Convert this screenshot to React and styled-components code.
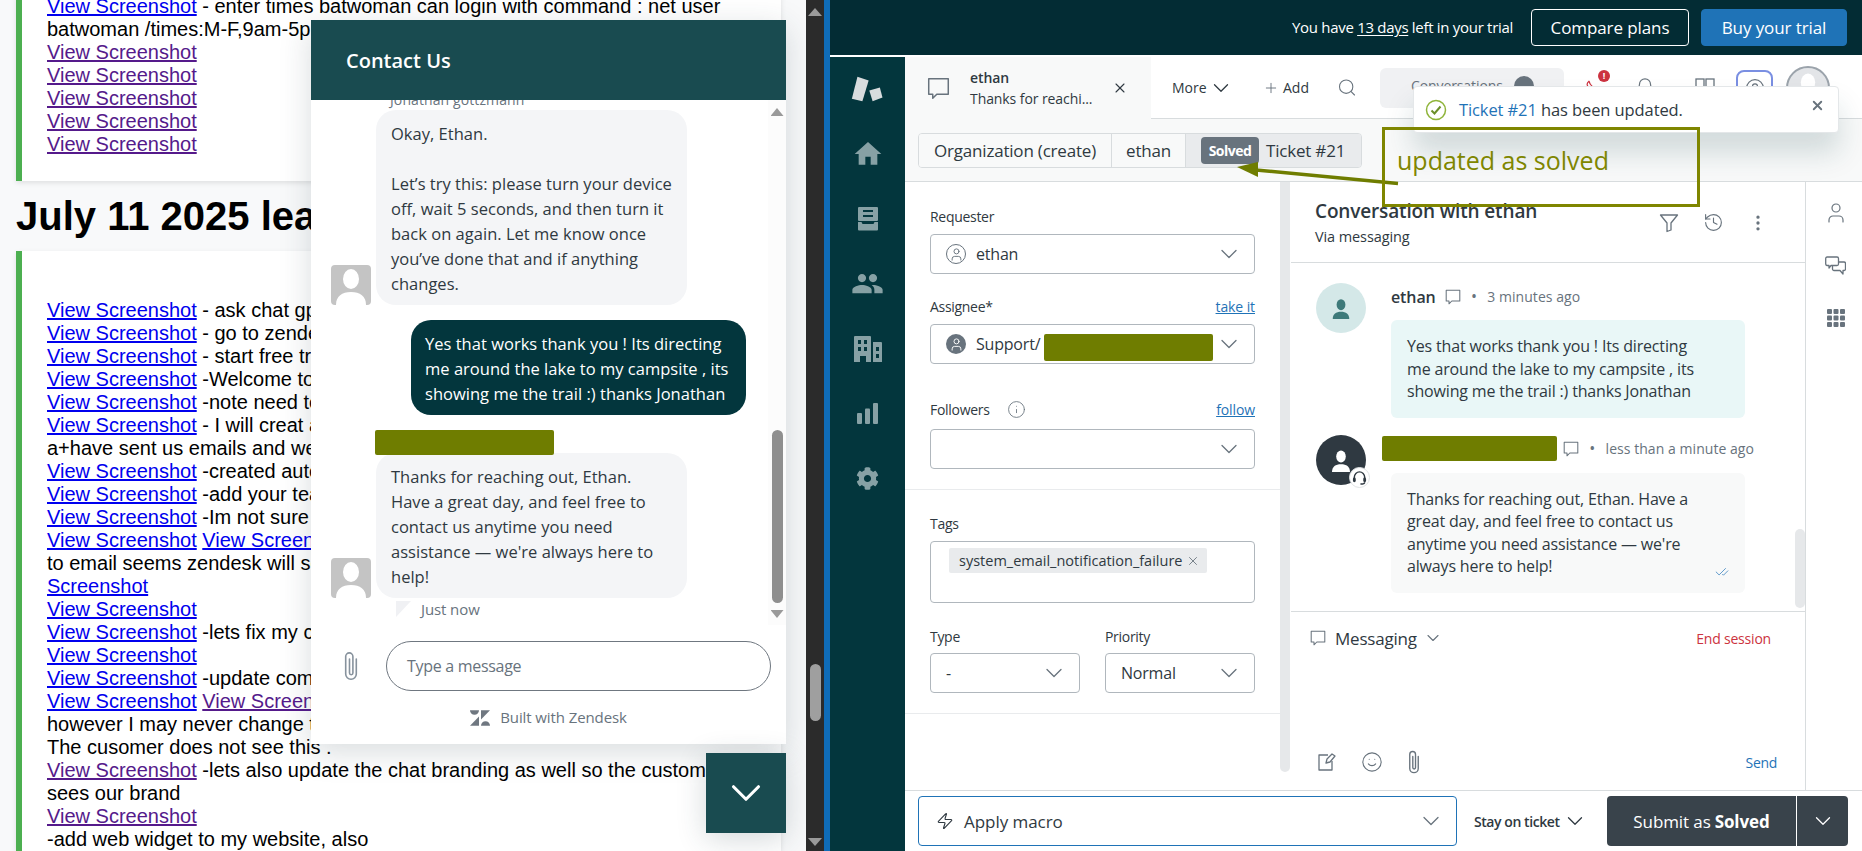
import React from "react";
import styled, { createGlobalStyle } from "styled-components";
import { ChevronDown, Plus, Search, X, History, MoreVertical, User, Smile, Zap, Flame, Bell, Info, CircleUser, CheckCheck } from "lucide-react";
import { MdHome, MdPeople } from "react-icons/md";
import { FaCog } from "react-icons/fa";

const UI = `"Open Sans", "Noto Sans", sans-serif`;
const OLIVE = "#6f7d00";
const INK = "#2f3941";
const GREY = "#68737d";

const Global = createGlobalStyle`
  html, body { margin: 0; padding: 0; width: 1862px; height: 851px; overflow: hidden; background: #fff; }
  * { box-sizing: border-box; }
`;

const Root = styled.div`
  position: relative; width: 1862px; height: 851px; display: flex; overflow: hidden;
  font-family: ${UI}; color: ${INK};
`;

/* ---------- left document page ---------- */
const DocPage = styled.div`
  position: relative; width: 806px; height: 851px; overflow: hidden; background: #f8f9fa;
  font-family: "Liberation Sans", Arial, sans-serif; font-size: 20px; line-height: 23px; color: #000;
  padding: 0 25px 0 16px;
`;
const Card = styled.section`
  background: #fff; border-left: 6px solid #4caf50; padding: ${(p) => p.$pad}; margin-top: ${(p) => p.$mt || 0};
  box-shadow: 0 2px 5px rgba(0,0,0,.1); white-space: nowrap;
`;
const DocTitle = styled.h1`
  margin: 12px 0; font-size: 40px; line-height: 46px; font-weight: 700; white-space: nowrap;
`;
const Line = styled.div` height: 23px; `;
const Shot = styled.a`
  color: ${(p) => (p.$seen ? "#551a8b" : "#0000ee")}; text-decoration: underline;
`;

const PageBar = styled.div`
  width: 18px; height: 851px; background: #2b2b2b; display: flex; flex-direction: column; align-items: center;
  padding: 8px 0 5px;
`;
const Tri = styled.div`
  width: ${(p) => p.$w || 14}px; height: ${(p) => p.$h || 8}px; background: #9a9a9a; flex: none;
  clip-path: ${(p) => (p.$down ? "polygon(0 0,100% 0,50% 100%)" : "polygon(50% 0,100% 100%,0 100%)")};
`;
const PageThumb = styled.div`
  width: 11px; height: 57px; background: #9f9f9f; border-radius: 6px; margin-top: auto; margin-bottom: 117px;
`;
const Splitter = styled.div` width: 6px; height: 851px; background: #0f6cb8; `;

/* ---------- chat widget ---------- */
const Widget = styled.aside`
  position: absolute; left: 311px; top: 20px; width: 475px; height: 724px; background: #fff;
  display: flex; flex-direction: column; font-family: ${UI};
  box-shadow: 0 8px 30px rgba(40,60,70,.18);
`;
const WidgetHead = styled.header`
  height: 80px; flex: none; background: #194b50; color: #fff; display: flex; align-items: center; padding-left: 35px;
  font-size: 20px; font-weight: 600; letter-spacing: 0; position: relative; z-index: 1;
`;
const WidgetBody = styled.div` height: 525px; flex: none; display: flex; overflow: hidden; `;
const Thread = styled.div` flex: 1; padding-left: 20px; display: flex; flex-direction: column; align-items: flex-start; `;
const SenderName = styled.div`
  margin: -8px 0 2px 59px; height: 16px; line-height: 16px; font-size: 14px; color: #68737d; letter-spacing: .1px; white-space: nowrap;
`;
const AgentRow = styled.div` display: flex; align-items: flex-end; gap: 5px; `;
const SquareAvatar = styled.div`
  width: 40px; height: 40px; background: #c4c4c4; border-radius: 4px; overflow: hidden; flex: none;
  svg { display: block; }
`;
const ChatBubble = styled.div`
  border-radius: 20px; padding: 10.5px ${(p) => (p.$me ? 14 : 15)}px 9.5px; font-size: 16.5px; line-height: 25px; white-space: nowrap; letter-spacing: .02px;
  width: ${(p) => p.$w}px;
  background: ${(p) => (p.$me ? "#03363d" : "#f4f5f7")}; color: ${(p) => (p.$me ? "#fff" : INK)};
  align-self: ${(p) => (p.$me ? "flex-end" : "auto")}; margin: ${(p) => p.$m || 0};
`;
const ChatRedact = styled.div` width: 179px; height: 25px; background: ${OLIVE}; border-radius: 2px; margin: 15px 0 -2px 44px; position: relative; `;
const Seen = styled.div`
  display: flex; align-items: center; gap: 10px; margin: 3px 0 0 65px; height: 16px; font-size: 15px; color: ${GREY}; letter-spacing: -.1px;
`;
const Tail = styled.div` width: 15px; height: 16px; background: #f0f1f4; clip-path: polygon(0 100%,0 0,100% 0); `;
const ChatTrack = styled.div`
  width: 18px; height: 525px; background: #fcfcfc; display: flex; flex-direction: column; align-items: center; padding: 8px 0 7px; flex: none;
`;
const ChatThumb = styled.div` width: 11px; height: 173px; background: #8f8f8f; border-radius: 6px; margin-top: auto; margin-bottom: 7px; `;
const Compose = styled.div` display: flex; align-items: center; padding: 16px 0 0 32px; gap: 27px; color: #87929d; `;
const ChatInput = styled.div`
  width: 385px; height: 50px; border: 1px solid #6f7780; border-radius: 25px; padding-left: 20px;
  display: flex; align-items: center; font-size: 16px; color: ${GREY}; letter-spacing: -.3px;
`;
const BuiltWith = styled.div`
  flex: 1; display: flex; align-items: center; justify-content: center; gap: 10px; font-size: 15px; color: ${GREY}; letter-spacing: -.1px;
`;
const WidgetToggle = styled.button`
  position: absolute; left: 706px; top: 753px; width: 80px; height: 80px; border: 0; background: #194b50; color: #fff;
  display: flex; align-items: center; justify-content: center; padding: 0; box-shadow: 0 6px 30px rgba(40,60,70,.2);
`;

/* ---------- agent workspace ---------- */
const Agent = styled.div` width: 1032px; height: 851px; display: flex; flex-direction: column; background: #fff; `;
const TrialBar = styled.div`
  height: 55px; flex: none; background: #032c34; color: #fff; display: flex; align-items: center; justify-content: flex-end;
  padding: 0 15px 1px 0; margin-bottom: 2px; font-size: 15px; letter-spacing: -.3px;
  u { text-underline-offset: 2px; }
`;
const TrialBtn = styled.div`
  height: 37px; width: ${(p) => p.$w}px; margin-left: ${(p) => p.$ml}px; border-radius: 4px; display: flex; align-items: center; justify-content: center;
  font-size: 17px; letter-spacing: -.1px; border: 1px solid ${(p) => (p.$fill ? "#1f73b7" : "#fff")}; background: ${(p) => (p.$fill ? "#1f73b7" : "transparent")};
`;
const AppBody = styled.div` flex: 1; display: flex; min-height: 0; `;
const Rail = styled.nav`
  width: 75px; flex: none; background: #03363d; display: flex; flex-direction: column; align-items: center; color: #87a1a5;
`;
const RailLogo = styled.div` height: 64px; display: flex; align-items: center; justify-content: center; `;
const RailItem = styled.div` height: 65px; width: 100%; display: flex; align-items: center; justify-content: center; `;
const Main = styled.div` flex: 1; display: flex; flex-direction: column; min-width: 0; `;

const TabBar = styled.div` height: 62px; flex: none; display: flex; align-items: stretch; background: #fff; `;
const ActiveTab = styled.div`
  width: 246px; flex: none; background: #f8f9f9; display: flex; align-items: center; padding-left: 22px; gap: 20px; position: relative;
`;
const TabText = styled.div`
  display: flex; flex-direction: column; font-size: 14px; line-height: 21px; letter-spacing: -.08px; width: 136px; white-space: nowrap; padding-bottom: 1px;
  b { font-weight: 600; }
`;
const TabRest = styled.div`
  flex: 1; display: flex; align-items: center; border-bottom: 1px solid #d8dcde; padding-left: 21px; font-size: 14px; letter-spacing: 0; position: relative;
`;
const TabAction = styled.div` display: flex; align-items: center; gap: ${(p) => p.$gap || 4}px; width: ${(p) => p.$w}px; flex: none; color: ${INK}; `;
const SearchPill = styled.div`
  width: 184px; height: 40px; margin-left: 23px; border-radius: 6px; background: #f0f1f3; flex: none; display: flex; align-items: flex-start;
  gap: 11px; padding: 8px 0 0 31px; color: ${GREY}; font-size: 14px; letter-spacing: -.1px;
`;
const CountDot = styled.span` width: 20px; height: 20px; border-radius: 50%; background: ${GREY}; flex: none; `;
const TopIcon = styled.div`
  position: relative; width: ${(p) => p.$w}px; flex: none; display: flex; justify-content: center; color: ${(p) => p.$c || GREY}; margin-left: ${(p) => p.$ml || 0}px;
`;
const AlertDot = styled.span`
  position: absolute; left: 19px; top: -9px; width: 12px; height: 12px; border-radius: 50%; background: #cc3340; color: #fff;
  font-size: 9px; line-height: 12px; font-weight: 700; text-align: center; letter-spacing: 0;
`;
const HelpBtn = styled.div`
  width: 37px; height: 36px; margin-left: 21px; border: 2px solid #7a8fe2; border-radius: 8px; flex: none; display: flex; align-items: center; justify-content: center; color: ${GREY};
`;
const ProfileRing = styled.div`
  width: 44px; height: 44px; margin-left: 13px; border-radius: 50%; border: 2px solid #9ba3ab; background: #e3e5e8; flex: none; overflow: hidden; padding: 2px;
  svg { display: block; }
`;

const CrumbBar = styled.div`
  height: 63px; flex: none; background: #f8f9f9; border-bottom: 1px solid #d8dcde; padding: 14px 13px; display: flex; align-items: flex-start;
`;
const Crumbs = styled.div` display: flex; height: 35px; border: 1px solid #d8dcde; border-radius: 4px; overflow: hidden; font-size: 17px; letter-spacing: -.2px; `;
const Crumb = styled.div`
  display: flex; align-items: center; gap: 7px; width: ${(p) => p.$w}px; justify-content: ${(p) => (p.$active ? "flex-start" : "center")}; padding-left: ${(p) => (p.$active ? 15 : 0)}px;
  background: ${(p) => (p.$active ? "#e9ebed" : "#f8f9f9")}; border-right: 1px solid ${(p) => (p.$active ? "transparent" : "#d8dcde")};
`;
const StatusBadge = styled.span`
  background: ${GREY}; color: #fff; font-size: 14px; font-weight: 700; width: 58px; height: 27px; border-radius: 4px; display: flex; align-items: center; justify-content: center; letter-spacing: -.5px;
`;

const Workspace = styled.div` flex: 1; display: flex; min-height: 0; `;
const FormPanel = styled.div` width: 375px; flex: none; display: flex; flex-direction: column; `;
const FormSection = styled.div`
  padding: ${(p) => p.$top}px 25px 20px; border-bottom: 1px solid #e9ebed;
`;
const LabelRow = styled.div`
  height: 20px; display: flex; align-items: center; justify-content: space-between; font-size: 14px; font-weight: 500; letter-spacing: -.3px;
  margin-top: ${(p) => p.$mt || 0}px; margin-bottom: ${(p) => (p.$mb === undefined ? 8 : p.$mb)}px; color: ${INK};
`;
const LabelWrap = styled.span` display: flex; align-items: center; gap: 17px; color: ${INK}; `;
const FieldLink = styled.a` color: #1f73b7; font-weight: 400; text-decoration: underline; font-size: 14px; letter-spacing: -.1px; `;
const Select = styled.div`
  height: 40px; border: 1px solid #b0b7bd; border-radius: 4px; background: #fff; display: flex; align-items: center; padding: 0 11px 0 15px; font-size: 16px; letter-spacing: -.2px;
  color: ${INK}; position: relative;
`;
const SelectValue = styled.span` flex: 1; display: flex; align-items: center; gap: 10px; white-space: nowrap; `;
const RoundFace = styled.span`
  width: 20px; height: 20px; border-radius: 50%; display: flex; align-items: center; justify-content: center; color: ${(p) => (p.$dark ? "#fff" : GREY)};
  background: ${(p) => (p.$dark ? GREY : "transparent")}; border: ${(p) => (p.$dark ? "0" : `1px solid ${GREY}`)}; overflow: hidden; flex: none;
`;
const AssigneeRedact = styled.span` position: absolute; left: 113px; top: 9px; width: 169px; height: 27px; background: ${OLIVE}; border-radius: 2px; `;
const TagBox = styled.div` height: 62px; border: 1px solid #b0b7bd; border-radius: 4px; padding: 6px 18px; `;
const Chip = styled.span`
  display: inline-flex; align-items: center; height: 25px; width: 258px; padding: 0 7px 0 10px; background: #e9ebed; border-radius: 2px; font-size: 14.5px; letter-spacing: 0; justify-content: space-between; white-space: nowrap;
`;
const TwoCols = styled.div` display: grid; grid-template-columns: 150px 150px; column-gap: 25px; margin-top: 23px; `;
const FormBar = styled.div` width: 10px; height: 590px; flex: none; background: #e6e8ea; border-radius: 0 0 5px 5px; margin-right: 1px; `;

const ConvPanel = styled.div` width: 515px; flex: none; border-right: 1px solid #d8dcde; display: flex; flex-direction: column; `;
const ConvHead = styled.div`
  height: 81px; flex: none; border-bottom: 1px solid #d8dcde; display: flex; align-items: center; justify-content: space-between; padding: 0 37px 0 24px;
`;
const ConvTitle = styled.div`
  font-size: 19px; font-weight: 600; line-height: 24px; letter-spacing: -.15px; padding-top: 5px;
  small { display: block; font-size: 14.5px; font-weight: 400; line-height: 27px; letter-spacing: -.1px; color: ${INK}; }
`;
const ConvTools = styled.div` display: flex; align-items: center; gap: 24px; color: ${GREY}; padding-top: 1px; `;
const Feed = styled.div` flex: 1; position: relative; padding: 20px 0 0 25px; min-height: 0; overflow: hidden; `;
const FeedThumb = styled.div` position: absolute; right: 0; top: 266px; width: 10px; height: 79px; background: #e6e8ea; border-radius: 5px; `;
const Msg = styled.div` display: flex; gap: 25px; margin-top: ${(p) => p.$mt || 0}px; `;
const RoundAvatar = styled.div`
  position: relative; width: 50px; height: 50px; border-radius: 50%; flex: none; background: ${(p) => p.$bg}; color: ${(p) => p.$fg}; display: flex; align-items: center; justify-content: center;
`;
const HeadsetBadge = styled.span`
  position: absolute; left: 33px; top: 32px; width: 21px; height: 21px; border-radius: 50%; background: #fff; border: 1px solid #e0e3e5; color: ${INK}; display: flex; align-items: center; justify-content: center;
`;
const MsgCol = styled.div` width: 354px; `;
const MsgMeta = styled.div`
  display: flex; align-items: center; height: ${(p) => (p.$agent ? 38 : 37)}px; padding-bottom: 10px; margin-left: ${(p) => (p.$agent ? -9 : 0)}px; width: 440px;
  font-size: 14px; color: ${GREY}; letter-spacing: .05px; white-space: nowrap;
  b { font-size: 16px; font-weight: 600; color: ${INK}; margin-right: 9px; letter-spacing: -.1px; }
  i { font-style: normal; font-weight: 700; margin: 0 11px; font-size: 12px; }
  svg { flex: none; }
`;
const MetaRedact = styled.span` width: 175px; height: 25px; background: ${OLIVE}; border-radius: 2px; margin-right: 6px; flex: none; `;
const MsgBubble = styled.div`
  position: relative; width: 354px; padding: 15px 16px; border-radius: 6px; font-size: 16px; line-height: 22.5px; letter-spacing: -.17px; white-space: nowrap; background: ${(p) => p.$bg}; color: ${INK};
`;
const ReadMark = styled.span` position: absolute; right: 16px; bottom: 14px; color: #1f73b7; display: flex; `;
const Composer = styled.div`
  height: 179px; flex: none; border-top: 1px solid #d8dcde; display: flex; flex-direction: column; justify-content: space-between; padding: 15px 28px 16px 19px;
`;
const ComposerTop = styled.div`
  display: flex; align-items: center; gap: 6px; font-size: 17px; letter-spacing: -.2px; padding-right: 6px; height: 22px;
`;
const ComposerLabel = styled.span` margin-left: 3px; `;
const EndSession = styled.span` margin-left: auto; color: #cc3340; font-size: 14px; letter-spacing: -.2px; `;
const ComposerBottom = styled.div` display: flex; align-items: center; gap: 24px; padding-left: 7px; color: ${GREY}; height: 24px; `;
const SendLink = styled.span` margin-left: auto; color: #1f73b7; font-size: 14px; letter-spacing: -.3px; `;

const SideTools = styled.div`
  width: 56px; flex: none; display: flex; flex-direction: column; align-items: center; padding: 19px 0 0 3px; gap: 31px; color: ${GREY};
`;

const ActionBar = styled.div` height: 61px; flex: none; border-top: 1px solid #d8dcde; display: flex; align-items: center; padding: 0 0 0 13px; `;
const MacroBox = styled.div`
  width: 539px; height: 50px; border: 1px solid #1f73b7; border-radius: 4px; display: flex; align-items: center; padding: 0 11px 0 17px; gap: 8px; font-size: 17px; letter-spacing: -.05px; flex: none;
`;
const MacroLabel = styled.span` flex: 1; margin-left: 2px; `;
const StayOn = styled.div`
  width: 150px; flex: none; display: flex; align-items: center; gap: 2px; padding-left: 17px; font-size: 14px; font-weight: 600; letter-spacing: -.43px;
`;
const SubmitGroup = styled.div` display: flex; height: 50px; gap: 1px; flex: none; background: #fff; `;
const SubmitBtn = styled.div`
  width: ${(p) => p.$w}px; background: #39434b; color: #fff; font-size: 17px; display: flex; align-items: center; justify-content: center; letter-spacing: -.1px;
  border-radius: ${(p) => (p.$end ? "0 4px 4px 0" : "4px 0 0 4px")};
  b { font-weight: 700; margin-left: 4px; }
`;

/* ---------- overlays on the agent area ---------- */
const Toast = styled.div`
  position: absolute; left: 1413px; top: 86px; width: 426px; height: 47px; background: #fff; border: 1px solid #e4e7e9; border-radius: 4px;
  display: flex; align-items: center; padding: 0 0 0 11px; gap: 12px; font-size: 16.5px; letter-spacing: -.1px; color: ${INK};
  box-shadow: 0 20px 28px rgba(23,73,77,.17);
  a { color: #1f73b7; }
`;
const ToastClose = styled.span` position: absolute; right: 13px; top: 11px; color: ${GREY}; display: flex; `;
const Callout = styled.div`
  position: absolute; left: 1382px; top: 127px; width: 318px; height: 80px; border: 3px solid #7f8600; padding: 12px 0 0 12px;
  color: #7f8600; font-size: 25px; line-height: 36px; letter-spacing: 0; white-space: nowrap;
`;
const CalloutArrow = styled.svg` position: absolute; left: 1230px; top: 155px; `;

/* ---------- icons ---------- */
const Bubble = ({ s = 18, c = GREY, w = 1.3 }) => (
  <svg width={s} height={s} viewBox="0 0 20 20" fill="none" stroke={c} strokeWidth={w} strokeLinejoin="round">
    <path d="M1.5 1.5h17v13.5H8.5L5 18.5V15H1.5z" />
  </svg>
);
const Silhouette = ({ s = 40, c = "#fff" }) => (
  <svg width={s} height={s} viewBox="0 0 40 40" fill={c}>
    <ellipse cx="20" cy="14" rx="8" ry="10" />
    <path d="M5 40c0-9 6-13 15-13s15 4 15 13z" />
  </svg>
);
const AppLogo = () => (
  <svg width="35" height="28" viewBox="60 75 105 85" fill="#d8dcde">
    <path d="M82 80l34 12-19 63-32-8z" />
    <path d="M118 122l32-9 8 30-30 12z" />
  </svg>
);
const TicketsIcon = () => (
  <svg width="22" height="24" viewBox="0 0 22 24" fill="currentColor">
    <path fillRule="evenodd" d="M2 0h18a1 1 0 0 1 1 1v12a1 1 0 0 1-1 1H2a1 1 0 0 1-1-1V1a1 1 0 0 1 1-1zM6 3v2h10V3zM6 8v2h10V8z" />
    <path d="M1 15h3.5l1 2h11l1-2H21v7.500a1 1 0 0 1-1 1H2a1 1 0 0 1-1-1z" />
  </svg>
);
const BuildingIcon = () => (
  <svg width="28" height="26" viewBox="0 0 28 26" fill="currentColor">
    <path fillRule="evenodd" d="M0 1a1 1 0 0 1 1-1h15a1 1 0 0 1 1 1v25h-5v-6H6v6H0zM4 4v4h3V4zM10 4v4h3V4zM4 11v4h3v-4zM10 11v4h3v-4z" />
    <path fillRule="evenodd" d="M19 6h8a1 1 0 0 1 1 1v19h-9zM22 11v4h3v-4zM22 18v4h3v-4z" />
  </svg>
);
const ChartIcon = () => (
  <svg width="21" height="21" viewBox="0 0 21 21" fill="currentColor">
    <rect x="0" y="10" width="5" height="11" rx="1" />
    <rect x="8" y="5.500" width="5" height="15.500" rx="1" />
    <rect x="16" y="0" width="5" height="21" rx="1" />
  </svg>
);
const ZdMark = () => (
  <svg width="20" height="16" viewBox="0 0 20 15.500" fill="#6f7780">
    <path d="M9 6.200V15.500H0z" />
    <path d="M9 0c0 2.500-2 4.500-4.500 4.500S0 2.500 0 0z" />
    <path d="M11 15.500c0-2.500 2-4.500 4.500-4.500s4.500 2 4.500 4.500z" />
    <path d="M11 9.300V0h9z" />
  </svg>
);
const FilterIcon = () => (
  <svg width="20" height="20" viewBox="0 0 20 20" fill="none" stroke="currentColor" strokeWidth="1.300" strokeLinejoin="round">
    <path d="M1.500 2h17l-6.500 8v7l-4 1.500V10z" />
  </svg>
);
const ChatsIcon = () => (
  <svg width="21" height="22" viewBox="0 0 21 22" fill="none" stroke="currentColor" strokeWidth="1.300" strokeLinejoin="round">
    <path d="M2 1h10a1.500 1.500 0 0 1 1.500 1.500V8A1.500 1.500 0 0 1 12 9.500H6L4 12V9.500H2A1.500 1.500 0 0 1 .7 8V2.500A1.500 1.500 0 0 1 2 1z" />
    <path d="M13.500 6H19a1.500 1.500 0 0 1 1.500 1.500V13A1.500 1.500 0 0 1 19 14.500h-1V18l-3-3.500H9A1.500 1.500 0 0 1 7.500 13V9.500" />
  </svg>
);
const GridIcon = () => (
  <svg width="18" height="18" viewBox="0 0 18 18" fill="currentColor">
    {[0, 6.5, 13].flatMap((y) => [0, 6.5, 13].map((x) => <rect key={`${x}-${y}`} x={x} y={y} width="5" height="5" rx="1" />))}
  </svg>
);
const PagesIcon = () => (
  <svg width="20" height="20" viewBox="0 0 20 20" fill="none" stroke="currentColor" strokeWidth="1.300">
    <rect x="1" y="1" width="8" height="16" /><rect x="11" y="1" width="8" height="16" />
  </svg>
);
const ComposeIcon = () => (
  <svg width="20" height="20" viewBox="0 0 20 20" fill="none" stroke="currentColor" strokeWidth="1.300" strokeLinejoin="round">
    <path d="M11 3H2v15h13V9" /><path d="M9 11l1-4 5-5 3 2-5 6z" />
  </svg>
);
const HeadsetIcon = () => (
  <svg width="15" height="15" viewBox="0 0 16 16" fill="none" stroke="currentColor" strokeWidth="1.500">
    <path d="M2.500 9V7.500a5.500 5.500 0 0 1 11 0V9" />
    <rect x="1" y="8" width="3" height="5" rx="1.500" fill="currentColor" stroke="none" />
    <rect x="12" y="8" width="3" height="5" rx="1.500" fill="currentColor" stroke="none" />
    <path d="M13.500 13c0 1.500-2 2-4.500 2" />
  </svg>
);
const ClipIcon = ({ w = 16, h = 30, sw = 1.6 }) => (
  <svg width={w} height={h} viewBox="0 0 16 30" fill="none" stroke="currentColor" strokeWidth={sw} strokeLinecap="round">
    <path d="M6.500 8v14a1.700 1.700 0 0 0 3.400 0V5.500a3.600 3.600 0 0 0-7.200 0V23a5.300 5.300 0 0 0 10.600 0V8" />
  </svg>
);

const Chev = ({ s = 28, w = 1.1, c = GREY }) => <ChevronDown size={s} strokeWidth={w} color={c} />;

export default function App() {
  return (
    <Root>
      <Global />
      <DocPage>
        <Card $pad="0 0 25px 25px" $mt="-5px">
          <Line><Shot>View Screenshot</Shot> - enter times batwoman can login with command : net user</Line>
          <Line>batwoman /times:M-F,9am-5pm</Line>
          {[0, 1, 2, 3, 4].map((i) => <Line key={i}><Shot $seen>View Screenshot</Shot></Line>)}
        </Card>
        <DocTitle>July 11 2025 lead</DocTitle>
        <Card $pad="48px 0 0 25px">
          <Line><Shot>View Screenshot</Shot> - ask chat gpt</Line>
          <Line><Shot>View Screenshot</Shot> - go to zendesk</Line>
          <Line><Shot>View Screenshot</Shot> - start free trial</Line>
          <Line><Shot>View Screenshot</Shot> -Welcome to</Line>
          <Line><Shot>View Screenshot</Shot> -note need to</Line>
          <Line><Shot>View Screenshot</Shot> - I will creat a</Line>
          <Line>a+have sent us emails and we</Line>
          <Line><Shot>View Screenshot</Shot> -created auto</Line>
          <Line><Shot>View Screenshot</Shot> -add your team</Line>
          <Line><Shot>View Screenshot</Shot> -Im not sure</Line>
          <Line><Shot>View Screenshot</Shot> <Shot>View Screenshot</Shot></Line>
          <Line>to email seems zendesk will send</Line>
          <Line><Shot>Screenshot</Shot></Line>
          <Line><Shot>View Screenshot</Shot></Line>
          <Line><Shot>View Screenshot</Shot> -lets fix my chat</Line>
          <Line><Shot>View Screenshot</Shot></Line>
          <Line><Shot>View Screenshot</Shot> -update company</Line>
          <Line><Shot>View Screenshot</Shot> <Shot $seen>View Screenshot</Shot></Line>
          <Line>however I may never change this</Line>
          <Line>The cusomer does not see this .</Line>
          <Line><Shot $seen>View Screenshot</Shot> -lets also update the chat branding as well so the customer</Line>
          <Line>sees our brand</Line>
          <Line><Shot $seen>View Screenshot</Shot></Line>
          <Line>-add web widget to my website, also</Line>
        </Card>

        <Widget>
          <WidgetHead>Contact Us</WidgetHead>
          <WidgetBody>
            <Thread>
              <SenderName>Jonathan gottzmann</SenderName>
              <AgentRow>
                <SquareAvatar><Silhouette /></SquareAvatar>
                <ChatBubble $w={311}>
                  Okay, Ethan.<br /><br />
                  Let’s try this: please turn your device<br />
                  off, wait 5 seconds, and then turn it<br />
                  back on again. Let me know once<br />
                  you’ve done that and if anything<br />
                  changes.
                </ChatBubble>
              </AgentRow>
              <ChatBubble $me $w={335} $m="15px 22px 0 0">
                Yes that works thank you ! Its directing<br />
                me around the lake to my campsite , its<br />
                showing me the trail :) thanks Jonathan
              </ChatBubble>
              <ChatRedact />
              <AgentRow>
                <SquareAvatar><Silhouette /></SquareAvatar>
                <ChatBubble $w={311}>
                  Thanks for reaching out, Ethan.<br />
                  Have a great day, and feel free to<br />
                  contact us anytime you need<br />
                  assistance — we're always here to<br />
                  help!
                </ChatBubble>
              </AgentRow>
              <Seen><Tail />Just now</Seen>
            </Thread>
            <ChatTrack>
              <Tri $w={13} $h={8} />
              <ChatThumb />
              <Tri $w={13} $h={8} $down />
            </ChatTrack>
          </WidgetBody>
          <Compose>
            <ClipIcon />
            <ChatInput>Type a message</ChatInput>
          </Compose>
          <BuiltWith><ZdMark />Built with Zendesk</BuiltWith>
        </Widget>
        <WidgetToggle aria-label="Close chat"><ChevronDown size={50} strokeWidth={1.5} /></WidgetToggle>
      </DocPage>

      <PageBar>
        <Tri />
        <PageThumb />
        <Tri $down />
      </PageBar>
      <Splitter />

      <Agent>
        <TrialBar>
          <span>You have <u>13 days</u> left in your trial</span>
          <TrialBtn $w={158} $ml={18}>Compare plans</TrialBtn>
          <TrialBtn $w={146} $ml={12} $fill>Buy your trial</TrialBtn>
        </TrialBar>
        <AppBody>
          <Rail>
            <RailLogo><AppLogo /></RailLogo>
            <RailItem><MdHome size={32} /></RailItem>
            <RailItem><TicketsIcon /></RailItem>
            <RailItem><MdPeople size={33} /></RailItem>
            <RailItem><BuildingIcon /></RailItem>
            <RailItem><ChartIcon /></RailItem>
            <RailItem><FaCog size={23} /></RailItem>
          </Rail>
          <Main>
            <TabBar>
              <ActiveTab>
                <Bubble s={23} c={GREY} />
                <TabText><b>ethan</b><span>Thanks for reachi...</span></TabText>
                <X size={16} strokeWidth={1.6} color={INK} style={{ marginLeft: -14 }} />
              </ActiveTab>
              <TabRest>
                <TabAction $w={91} $gap={1}>More <Chev s={26} w={1.2} c={INK} /></TabAction>
                <TabAction $w={74}><Plus size={16} strokeWidth={1.4} color={GREY} />Add</TabAction>
                <TabAction $w={20}><Search size={21} strokeWidth={1.3} color={GREY} /></TabAction>
                <SearchPill>Conversations<CountDot /></SearchPill>
                <TopIcon $w={20} $ml={15} $c="#cc3340"><Flame size={18} strokeWidth={1.6} /><AlertDot>!</AlertDot></TopIcon>
                <TopIcon $w={24} $ml={34}><Bell size={22} strokeWidth={1.3} /></TopIcon>
                <TopIcon $w={20} $ml={38}><PagesIcon /></TopIcon>
                <HelpBtn><CircleUser size={20} strokeWidth={1.4} /></HelpBtn>
                <ProfileRing><Silhouette s={36} /></ProfileRing>
              </TabRest>
            </TabBar>
            <CrumbBar>
              <Crumbs>
                <Crumb $w={193}>Organization (create)</Crumb>
                <Crumb $w={74}>ethan</Crumb>
                <Crumb $w={175} $active><StatusBadge>Solved</StatusBadge>Ticket #21</Crumb>
              </Crumbs>
            </CrumbBar>
            <Workspace>
              <FormPanel>
                <FormSection $top={24}>
                  <LabelRow>Requester</LabelRow>
                  <Select>
                    <SelectValue><RoundFace><User size={15} strokeWidth={1.5} /></RoundFace>ethan</SelectValue>
                    <Chev />
                  </Select>
                  <LabelRow $mt={22}>Assignee*<FieldLink>take it</FieldLink></LabelRow>
                  <Select>
                    <SelectValue><RoundFace $dark><User size={15} strokeWidth={1.5} /></RoundFace>Support/</SelectValue>
                    <AssigneeRedact />
                    <Chev />
                  </Select>
                  <LabelRow $mt={35} $mb={10}>
                    <LabelWrap>Followers <Info size={19} strokeWidth={1.1} color={GREY} /></LabelWrap>
                    <FieldLink>follow</FieldLink>
                  </LabelRow>
                  <Select>
                    <SelectValue />
                    <Chev />
                  </Select>
                </FormSection>
                <FormSection $top={23}>
                  <LabelRow>Tags</LabelRow>
                  <TagBox>
                    <Chip>system_email_notification_failure<X size={14} strokeWidth={1.5} color={GREY} /></Chip>
                  </TagBox>
                  <TwoCols>
                    <div>
                      <LabelRow $mb={7}>Type</LabelRow>
                      <Select><SelectValue>-</SelectValue><Chev /></Select>
                    </div>
                    <div>
                      <LabelRow $mb={7}>Priority</LabelRow>
                      <Select><SelectValue>Normal</SelectValue><Chev /></Select>
                    </div>
                  </TwoCols>
                </FormSection>
              </FormPanel>
              <FormBar />
              <ConvPanel>
                <ConvHead>
                  <ConvTitle>Conversation with ethan<small>Via messaging</small></ConvTitle>
                  <ConvTools>
                    <FilterIcon />
                    <History size={21} strokeWidth={1.3} />
                    <MoreVertical size={20} strokeWidth={2} />
                  </ConvTools>
                </ConvHead>
                <Feed>
                  <Msg>
                    <RoundAvatar $bg="#d4e8e8" $fg="#3e7a7a"><Silhouette s={22} c="#3e7a7a" /></RoundAvatar>
                    <MsgCol>
                      <MsgMeta><b>ethan</b><Bubble s={16} /><i>•</i>3 minutes ago</MsgMeta>
                      <MsgBubble $bg="#e9f7f7">
                        Yes that works thank you ! Its directing<br />
                        me around the lake to my campsite , its<br />
                        showing me the trail :) thanks Jonathan
                      </MsgBubble>
                    </MsgCol>
                  </Msg>
                  <Msg $mt={17}>
                    <RoundAvatar $bg="#2f3941" $fg="#fff">
                      <Silhouette s={24} />
                      <HeadsetBadge><HeadsetIcon /></HeadsetBadge>
                    </RoundAvatar>
                    <MsgCol>
                      <MsgMeta $agent><MetaRedact /><Bubble s={16} /><i>•</i>less than a minute ago</MsgMeta>
                      <MsgBubble $bg="#f8f9f9">
                        Thanks for reaching out, Ethan. Have a<br />
                        great day, and feel free to contact us<br />
                        anytime you need assistance — we're<br />
                        always here to help!
                        <ReadMark><CheckCheck size={14} strokeWidth={1.2} /></ReadMark>
                      </MsgBubble>
                    </MsgCol>
                  </Msg>
                  <FeedThumb />
                </Feed>
                <Composer>
                  <ComposerTop>
                    <Bubble s={16} />
                    <ComposerLabel>Messaging</ComposerLabel>
                    <Chev s={20} w={1.3} />
                    <EndSession>End session</EndSession>
                  </ComposerTop>
                  <ComposerBottom>
                    <ComposeIcon />
                    <Smile size={22} strokeWidth={1.2} />
                    <ClipIcon w={14} h={24} sw={1.7} />
                    <SendLink>Send</SendLink>
                  </ComposerBottom>
                </Composer>
              </ConvPanel>
              <SideTools>
                <User size={24} strokeWidth={1.2} />
                <ChatsIcon />
                <GridIcon />
              </SideTools>
            </Workspace>
            <ActionBar>
              <MacroBox>
                <Zap size={18} strokeWidth={1.5} />
                <MacroLabel>Apply macro</MacroLabel>
                <Chev />
              </MacroBox>
              <StayOn>Stay on ticket <Chev s={26} w={1.2} c={INK} /></StayOn>
              <SubmitGroup>
                <SubmitBtn $w={189}>Submit as <b>Solved</b></SubmitBtn>
                <SubmitBtn $w={51} $end><Chev s={26} w={1.2} c="#fff" /></SubmitBtn>
              </SubmitGroup>
            </ActionBar>
          </Main>
        </AppBody>
      </Agent>

      <Toast>
        <svg width="22" height="22" viewBox="0 0 22 22" fill="none">
          <circle cx="11" cy="11" r="9.500" stroke="#8fb43a" strokeWidth="1.500" />
          <path d="M6.500 11.500l3 3 6-7" stroke="#6b8f2a" strokeWidth="2" />
        </svg>
        <span><a>Ticket #21</a> has been updated.</span>
        <ToastClose><X size={15} strokeWidth={3} /></ToastClose>
      </Toast>
      <CalloutArrow width="175" height="35" viewBox="0 0 175 35">
        <path d="M7 12L28 7v15z" fill="#6f7d00" />
        <path d="M26 15L168 28.500" stroke="#6f7d00" strokeWidth="3.500" />
      </CalloutArrow>
      <Callout>updated as solved</Callout>
    </Root>
  );
}
